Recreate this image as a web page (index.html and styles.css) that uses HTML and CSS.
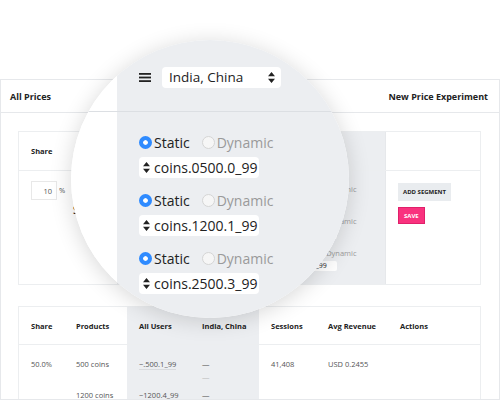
FILE: index.html
```html
<!DOCTYPE html>
<html lang="en">
<head>
    <meta charset="UTF-8">
    <meta name="viewport" content="width=device-width, initial-scale=1.0">
    <title>Price Experiment</title>
    <link rel="stylesheet" href="styles.css">
</head>
<body>
    <div class="page">
        <div class="panel">
            <div class="panel-head">
                <span>All Prices</span>
                <span>New Price Experiment</span>
            </div>
            <div class="panel-body">
                <div class="card seg-card">
                    <div class="seg-row seg-head">
                        <div class="cell c-share">Share</div>
                        <div class="cell c-name"></div>
                        <div class="cell c-gray"></div>
                        <div class="cell c-act"></div>
                    </div>
                    <div class="seg-row seg-body">
                        <div class="cell c-share">
                            <span class="share-input">10</span><span class="pct">%</span>
                        </div>
                        <div class="cell c-name"><span class="seg-name">Segment</span></div>
                        <div class="cell c-gray">
                            <div class="mini-group">
                                <div class="mini-radios"><i class="mini-dot on"></i>Static<i class="mini-dot"></i><span class="muted">Dynamic</span></div>
                                <div class="mini-select">coins.0500.0_99</div>
                            </div>
                            <div class="mini-group">
                                <div class="mini-radios"><i class="mini-dot on"></i>Static<i class="mini-dot"></i><span class="muted">Dynamic</span></div>
                                <div class="mini-select">coins.1200.1_99</div>
                            </div>
                            <div class="mini-group">
                                <div class="mini-radios"><i class="mini-dot on"></i>Static<i class="mini-dot"></i><span class="muted">Dynamic</span></div>
                                <div class="mini-select">coins.2500.3_99</div>
                            </div>
                        </div>
                        <div class="cell c-act">
                            <button class="btn-add">ADD SEGMENT</button>
                            <button class="btn-save">SAVE</button>
                        </div>
                    </div>
                </div>

                <div class="card stats-card">
                    <div class="stats-row stats-head">
                        <div class="cell">Share</div>
                        <div class="cell">Products</div>
                        <div class="cell gray">All Users</div>
                        <div class="cell gray">India, China</div>
                        <div class="cell">Sessions</div>
                        <div class="cell">Avg Revenue</div>
                        <div class="cell">Actions</div>
                    </div>
                    <div class="stats-row stats-item">
                        <div class="cell">50.0%</div>
                        <div class="cell">500 coins</div>
                        <div class="cell gray"><span class="sku">~.500.1_99</span></div>
                        <div class="cell gray">—<br><span class="faint">—</span></div>
                        <div class="cell">41,408</div>
                        <div class="cell">USD 0.2455</div>
                        <div class="cell"></div>
                    </div>
                    <div class="stats-row stats-item next">
                        <div class="cell"></div>
                        <div class="cell">1200 coins</div>
                        <div class="cell gray">~1200.4_99</div>
                        <div class="cell gray">—</div>
                        <div class="cell"></div>
                        <div class="cell"></div>
                        <div class="cell"></div>
                    </div>
                </div>
            </div>
        </div>

        <!-- magnified segment editor -->
        <div class="lens">
            <div class="lens-side top"></div>
            <div class="lens-main top">
                <svg class="menu-icon" width="12" height="9" viewBox="0 0 12 9">
                    <rect x="0" y="0" width="12" height="1.8" fill="#222"/>
                    <rect x="0" y="3.6" width="12" height="1.8" fill="#222"/>
                    <rect x="0" y="7.2" width="12" height="1.8" fill="#222"/>
                </svg>
                <div class="lens-select wide">
                    <span>India, China</span>
                    <svg width="7" height="11" viewBox="0 0 7 11"><path d="M3.5 0L7 4.3H0z M3.5 11L0 6.7h7z" fill="#222"/></svg>
                </div>
            </div>
            <div class="lens-side"></div>
            <div class="lens-main">
                <div class="lens-group">
                    <div class="radio-row">
                        <span class="radio on"></span>Static
                        <span class="radio"></span><span class="muted">Dynamic</span>
                    </div>
                    <div class="lens-select">
                        <svg width="7" height="11" viewBox="0 0 7 11"><path d="M3.5 0L7 4.3H0z M3.5 11L0 6.7h7z" fill="#222"/></svg>
                        <span>coins.0500.0_99</span>
                    </div>
                </div>
                <div class="lens-group">
                    <div class="radio-row">
                        <span class="radio on"></span>Static
                        <span class="radio"></span><span class="muted">Dynamic</span>
                    </div>
                    <div class="lens-select">
                        <svg width="7" height="11" viewBox="0 0 7 11"><path d="M3.5 0L7 4.3H0z M3.5 11L0 6.7h7z" fill="#222"/></svg>
                        <span>coins.1200.1_99</span>
                    </div>
                </div>
                <div class="lens-group">
                    <div class="radio-row">
                        <span class="radio on"></span>Static
                        <span class="radio"></span><span class="muted">Dynamic</span>
                    </div>
                    <div class="lens-select">
                        <svg width="7" height="11" viewBox="0 0 7 11"><path d="M3.5 0L7 4.3H0z M3.5 11L0 6.7h7z" fill="#222"/></svg>
                        <span>coins.2500.3_99</span>
                    </div>
                </div>
            </div>
        </div>
    </div>
</body>
</html>
```

FILE: styles.css
```css
body {
    margin: 0;
    padding: 0;
    background: #fff;
    font-family: "Open Sans", "Liberation Sans", sans-serif;
    color: #222;
}
.page {
    position: relative;
    width: 500px;
    height: 400px;
    overflow: hidden;
    padding-top: 79px;
    box-sizing: border-box;
}
.panel {
    height: 321px;
    border: 1px solid #e6e8eb;
    box-sizing: border-box;
    overflow: hidden;
}
.panel-head {
    height: 32px;
    padding: 0 11px 0 9px;
    border-bottom: 1px solid #e6e8eb;
    display: flex;
    align-items: center;
    justify-content: space-between;
    font-size: 9px;
    font-weight: 700;
}
.panel-body {
    padding: 18px 18px 0 17px;
}
.card {
    border: 1px solid #eceef0;
    background: #fff;
}
.cell {
    box-sizing: border-box;
    padding-left: 12px;
}

/* segment editor card */
.seg-row {
    display: grid;
    grid-template-columns: 45px 53px 268px 1fr;
}
.seg-head {
    height: 38px;
    border-bottom: 1px solid #eceef0;
    font-size: 7.5px;
    font-weight: 700;
}
.seg-head .cell {
    display: flex;
    align-items: center;
}
.seg-body {
    height: 113px;
}
.seg-body .cell {
    padding-top: 10px;
}
.c-share {
    white-space: nowrap;
}
.c-gray {
    background: #eceef1;
}
.c-act {
    border-left: 1px solid #e6e8eb;
}
.share-input {
    display: inline-block;
    vertical-align: top;
    width: 26px;
    height: 19px;
    line-height: 18px;
    border: 1px solid #e8e8e8;
    box-sizing: border-box;
    text-align: right;
    padding-right: 4px;
    font-size: 7.5px;
    color: #555;
}
.pct {
    display: inline-block;
    vertical-align: top;
    line-height: 19px;
    margin-left: 2px;
    font-size: 7.5px;
    color: #555;
}
.seg-name {
    display: inline-block;
    margin-top: 22px;
    margin-left: -3px;
    font-size: 10px;
    font-weight: 600;
}
.c-gray.cell {
    padding: 13px 0 0 153px;
}
.mini-group {
    margin-bottom: 9px;
}
.mini-radios {
    display: flex;
    align-items: center;
    height: 10px;
    margin-left: 13px;
    font-size: 7.5px;
    color: #777;
}
.mini-dot {
    width: 6px;
    height: 6px;
    border-radius: 50%;
    border: 1px solid #ccc;
    box-sizing: border-box;
    margin: 0 2px 0 8px;
}
.mini-dot.on {
    margin-left: 0;
    background: #2f8bff;
    border-color: #2f8bff;
}
.mini-select {
    width: 67px;
    height: 10px;
    line-height: 10px;
    margin-top: 3px;
    background: #fff;
    border-radius: 2px;
    font-size: 7px;
    padding-left: 5px;
    box-sizing: border-box;
}
.muted {
    color: #9a9a9a;
}
.c-act.cell {
    padding: 12px 0 0 12px;
    display: flex;
    flex-direction: column;
    align-items: flex-start;
    gap: 6px;
}
.c-act button {
    border: none;
    font-family: inherit;
    font-weight: 700;
    font-size: 6px;
    padding: 0 5px;
    height: 18px;
    cursor: pointer;
}
.btn-add {
    background: #e9ecef;
    color: #222;
}
.btn-save {
    background: #f9327e;
    color: #fff;
    height: 17px !important;
    border: 1px solid #e0206a !important;
}

/* stats table card */
.stats-card {
    margin-top: 21px;
}
.stats-row {
    display: grid;
    grid-template-columns: 45px 63px 63px 69px 57px 72px 1fr;
}
.stats-head {
    height: 37px;
    border-bottom: 1px solid #eceef0;
    font-size: 7.5px;
    font-weight: 700;
}
.stats-head .cell {
    display: flex;
    align-items: center;
}
.stats-row .gray {
    background: #eceef1;
}
.stats-item {
    font-size: 7.5px;
    line-height: 13px;
    color: #555;
}
.stats-item .cell {
    padding-top: 13px;
}
.stats-item.next .cell {
    padding-top: 5px;
    height: 40px;
}
.sku {
    border-bottom: 1px solid #d8dadd;
}
.faint {
    color: #bbb;
}

/* magnifier */
.lens {
    position: absolute;
    left: 71px;
    top: 40px;
    width: 278px;
    height: 278px;
    border-radius: 50%;
    overflow: hidden;
    background: #fff;
    box-shadow: 0 3px 22px rgba(0, 0, 0, 0.16);
    display: grid;
    grid-template-columns: 46px 1fr;
    grid-template-rows: 72px 1fr;
}
.lens-side {
    background: #fff;
}
.lens-main {
    background: #eceef1;
    padding-left: 22px;
}
.top {
    border-bottom: 1px solid #dcdfe3;
}
.lens-main.top {
    display: flex;
    align-items: center;
    padding-top: 3px;
    gap: 11px;
}
.lens-main:not(.top) {
    padding-top: 21px;
}
.lens-select {
    width: 120px;
    height: 21px;
    background: #fff;
    border-radius: 4px;
    display: flex;
    align-items: center;
    gap: 4px;
    padding-left: 4px;
    box-sizing: border-box;
    font-size: 14px;
    color: #222;
}
.lens-select.wide {
    width: 119px;
    padding: 0 6px 0 7px;
    justify-content: space-between;
    font-size: 13.5px;
}
.lens-group {
    margin-bottom: 13px;
}
.radio-row {
    display: flex;
    align-items: center;
    height: 18px;
    margin-bottom: 6px;
    font-size: 14px;
    color: #222;
}
.radio {
    width: 13px;
    height: 13px;
    border-radius: 50%;
    border: 1px solid #d4d4d4;
    background: #f6f6f6;
    box-sizing: border-box;
    margin: 0 2px 0 12px;
}
.radio.on {
    margin-left: 0;
    background: #2f8bff;
    border: 4.5px solid #2f8bff;
    box-shadow: inset 0 0 0 4px #fff;
}
```
